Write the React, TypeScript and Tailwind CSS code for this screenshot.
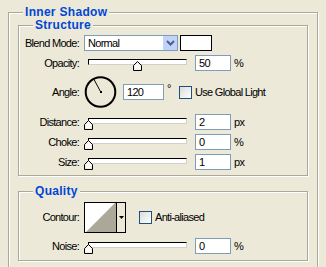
import React from 'react';

const font = { fontFamily: '"Liberation Sans", Arial, sans-serif' };

const Slider: React.FC<{ value: number }> = ({ value }) => (
  <div className="relative w-[107px] h-[16px] ml-[5px] shrink-0">
    {/* track */}
    <div className="absolute left-[4px] right-[4px] top-[4px] h-[6px] bg-white border border-black border-r-[#d4d0c8] border-b-[#d4d0c8]"></div>
    {/* thumb */}
    <svg
      className="absolute top-[6px]"
      style={{ left: 4 + (value / 100) * 99 - 4.5 }}
      width="10"
      height="10"
      viewBox="0 0 10 10"
    >
      <path d="M0.5 9.5 L0.5 4.5 L4.5 0.5 L8.5 4.5 L8.5 9.5 Z" fill="#ece9d8" stroke="#000" strokeWidth="1" />
      <path d="M1.5 8.5 L1.5 4.9 L4.5 1.9 L7.5 4.9 L7.5 8.5 Z" fill="#fbfbf7" />
    </svg>
  </div>
);

const NumBox: React.FC<{ value: string; w?: string }> = ({ value, w = 'w-[36px]' }) => (
  <div className={`${w} h-[16px] shrink-0 bg-white border border-[#7f9db9] pl-[3px] leading-[14px] text-[11px] text-black`}>
    {value}
  </div>
);

const Check: React.FC = () => (
  <div className="w-[13px] h-[13px] shrink-0 border border-[#1c5180] bg-gradient-to-br from-[#dcdcd7] to-white"></div>
);

const Label: React.FC<{ children: React.ReactNode }> = ({ children }) => (
  <div className="w-[60px] shrink-0 text-right">{children}</div>
);

const SliderRow: React.FC<{ label: string; value: string; pct: number; unit: string; className?: string }> = ({
  label,
  value,
  pct,
  unit,
  className = 'mt-[4px]',
}) => (
  <div className={`flex items-center h-[16px] ${className}`}>
    <Label>{label}</Label>
    <Slider value={pct} />
    <div className="ml-[4px]">
      <NumBox value={value} />
    </div>
    <span className="ml-[3px]">{unit}</span>
  </div>
);

const Group: React.FC<{ title: string; className?: string; children: React.ReactNode }> = ({ title, className = '', children }) => (
  <fieldset className={`border border-[#aca899] shadow-[inset_1px_1px_0_#fff,1px_1px_0_#fff] ${className}`}>
    <legend className="ml-[14px] px-[2px] h-[12px] leading-[12px] bg-[#ece9d8] font-bold text-[12px] text-[#0046d5] tracking-[0.3px]">
      {title}
    </legend>
    {children}
  </fieldset>
);

export default function App() {
  return (
    <div
      className="w-[326px] h-[267px] overflow-hidden bg-[#ece9d8] pt-[6px] px-[8px] text-[11px] text-black tracking-[-0.7px]"
      style={font}
    >
      <Group title="Inner Shadow" className="h-[300px]">
        <div className="pt-[1px] pl-[9px] pr-[9px]">
          {/* Structure */}
          <Group title="Structure">
            <div className="pt-[4px] pb-[5px]">
              <div className="flex items-center h-[16px]">
                <Label>Blend Mode:</Label>
                <div className="ml-[5px] w-[94px] h-[16px] shrink-0 flex items-center bg-white border border-[#7f9db9] pl-[3px]">
                  <span className="flex-1">Normal</span>
                  <div className="w-[15px] h-[14px] flex items-center justify-center bg-[#c1d3fb] border-l border-white">
                    <svg width="9" height="6" viewBox="0 0 9 6">
                      <path d="M1 1 L4.5 4.5 L8 1" fill="none" stroke="#4d6185" strokeWidth="2" />
                    </svg>
                  </div>
                </div>
                <div className="ml-[2px] w-[32px] h-[16px] shrink-0 bg-white border border-black"></div>
              </div>

              <SliderRow label="Opacity:" value="50" pct={50} unit="%" />

              <div className="flex items-center h-[32px] mt-[5px]">
                <Label>Angle:</Label>
                <svg className="ml-[5px] shrink-0" width="33" height="32" viewBox="0 0 33 32">
                  <circle cx="16.5" cy="16" r="14.8" fill="none" stroke="#000" strokeWidth="2" />
                  <line x1="17" y1="16.5" x2="9.5" y2="2.5" stroke="#000" strokeWidth="1" />
                  <rect x="16" y="15" width="2" height="2" fill="#000" />
                </svg>
                <div className="ml-[6px]">
                  <NumBox value="120" w="w-[41px]" />
                </div>
                <span className="w-[15px] pl-[3px] self-start mt-[7px] leading-[10px]">°</span>
                <Check />
                <span className="ml-[3px]">Use Global Light</span>
              </div>

              <SliderRow label="Distance:" value="2" pct={0} unit="px" className="mt-[6px]" />
              <SliderRow label="Choke:" value="0" pct={0} unit="%" />
              <SliderRow label="Size:" value="1" pct={0} unit="px" />
            </div>
          </Group>

          {/* Quality */}
          <Group title="Quality" className="mt-[9px]">
            <div className="pt-[5px] pb-[6px]">
              <div className="flex items-center h-[31px]">
                <Label>Contour:</Label>
                <div className="ml-[5px] w-[42px] h-[31px] shrink-0 flex border border-black">
                  <svg width="31" height="29" viewBox="0 0 31 29" className="shrink-0">
                    <rect x="0" y="0" width="31" height="29" fill="#fff" />
                    <path d="M1 29 L30 0 L31 0 L31 29 Z" fill="#aca899" />
                  </svg>
                  <div className="flex-1 border-l border-black bg-[#ece9d8] flex items-center justify-center">
                    <svg width="5" height="3" viewBox="0 0 5 3">
                      <path d="M0 0 L5 0 L2.5 3 Z" fill="#000" />
                    </svg>
                  </div>
                </div>
                <div className="ml-[13px]">
                  <Check />
                </div>
                <span className="ml-[3px]">Anti-aliased</span>
              </div>

              <SliderRow label="Noise:" value="0" pct={0} unit="%" className="mt-[5px]" />
            </div>
          </Group>
        </div>
      </Group>
    </div>
  );
}
